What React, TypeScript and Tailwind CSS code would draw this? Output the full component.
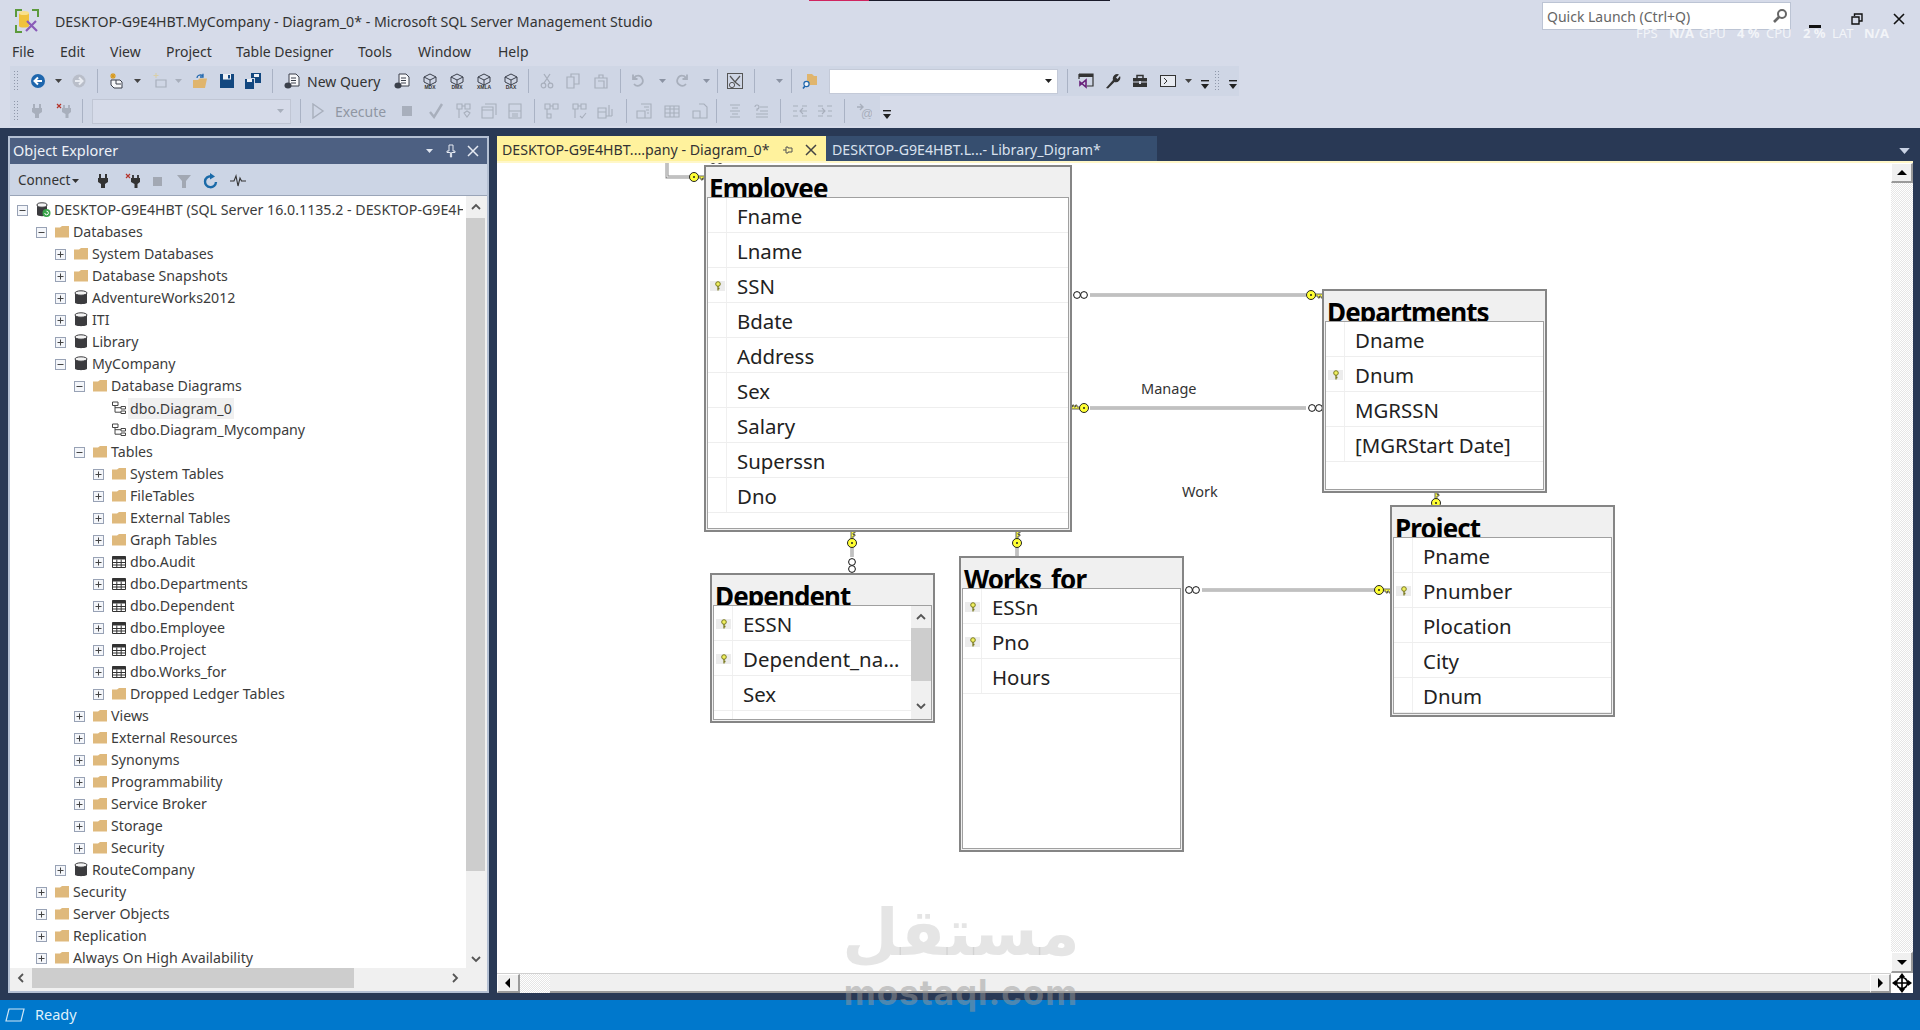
import type { ReactNode } from "react";

type Kind = "server" | "folder" | "db" | "diagram" | "table";

interface Node {
  level: number;
  label: string;
  kind: Kind;
  open?: boolean;
  leaf?: boolean;
  selected?: boolean;
}

const folder = (level: number, label: string, open = false): Node => ({ level, label, kind: "folder", open });
const db = (label: string, open = false): Node => ({ level: 2, label, kind: "db", open });
const table = (label: string): Node => ({ level: 4, label, kind: "table" });

const tree: Node[] = [
  { level: 0, label: "DESKTOP-G9E4HBT (SQL Server 16.0.1135.2 - DESKTOP-G9E4HBT\\User)", kind: "server", open: true },
  folder(1, "Databases", true),
  folder(2, "System Databases"),
  folder(2, "Database Snapshots"),
  db("AdventureWorks2012"),
  db("ITI"),
  db("Library"),
  db("MyCompany", true),
  folder(3, "Database Diagrams", true),
  { level: 4, label: "dbo.Diagram_0", kind: "diagram", leaf: true, selected: true },
  { level: 4, label: "dbo.Diagram_Mycompany", kind: "diagram", leaf: true },
  folder(3, "Tables", true),
  folder(4, "System Tables"),
  folder(4, "FileTables"),
  folder(4, "External Tables"),
  folder(4, "Graph Tables"),
  table("dbo.Audit"),
  table("dbo.Departments"),
  table("dbo.Dependent"),
  table("dbo.Employee"),
  table("dbo.Project"),
  table("dbo.Works_for"),
  folder(4, "Dropped Ledger Tables"),
  folder(3, "Views"),
  folder(3, "External Resources"),
  folder(3, "Synonyms"),
  folder(3, "Programmability"),
  folder(3, "Service Broker"),
  folder(3, "Storage"),
  folder(3, "Security"),
  db("RouteCompany"),
  folder(1, "Security"),
  folder(1, "Server Objects"),
  folder(1, "Replication"),
  folder(1, "Always On High Availability"),
];

const indent = ["pl-[7px]", "pl-[26px]", "pl-[45px]", "pl-[64px]", "pl-[83px]"];

function Ic({ children, className = "" }: { children: ReactNode; className?: string }) {
  return (
    <svg viewBox="0 0 16 16" className={`w-4 h-4 shrink-0 ${className}`}>
      {children}
    </svg>
  );
}

function Drop({ className = "", color = "#444" }: { className?: string; color?: string }) {
  return (
    <svg viewBox="0 0 7 4" className={`w-[7px] h-[4px] shrink-0 ${className}`}>
      <polygon points="0,0 7,0 3.5,4" fill={color} />
    </svg>
  );
}

function Sep({ className = "" }: { className?: string }) {
  return <div className={`w-px h-[24px] bg-[#a9b2c4] shrink-0 ${className}`} />;
}

function Grip() {
  return (
    <div className="w-[6px] h-[22px] shrink-0 bg-[radial-gradient(#8f98aa_0.8px,transparent_0.9px)] bg-[length:3px_3px]" />
  );
}

function Overflow({ className = "" }: { className?: string }) {
  return (
    <svg viewBox="0 0 8 10" className={`w-2 h-[10px] shrink-0 mt-[8px] ${className}`}>
      <rect x="0" y="0" width="8" height="1.4" fill="#222" />
      <polygon points="0,4 8,4 4,9" fill="#222" />
    </svg>
  );
}

function CubeIcon({ label, className = "" }: { label: string; className?: string }) {
  return (
    <Ic className={className}>
      <path d="M8 1 L14 4 V9 L8 12 L2 9 V4 Z M2 4 L8 7 L14 4 M8 7 V12" fill="none" stroke="#3a3f4a" strokeWidth="1" />
      <text x="8" y="15.8" textAnchor="middle" fontSize="5" fontWeight="700" fill="#333" fontFamily="Liberation Sans, sans-serif">
        {label}
      </text>
    </Ic>
  );
}

function FolderIc() {
  return (
    <Ic>
      <path d="M1 3.5 L1 13.5 L15 13.5 L15 2 L8 2 L6 3.5 Z" fill="#dfb97c" />
    </Ic>
  );
}

function DbIc() {
  return (
    <Ic>
      <path d="M2 3 V12.5 C2 14.7 14 14.7 14 12.5 V3 Z" fill="#3b3b3e" />
      <ellipse cx="8" cy="3" rx="6" ry="2.2" fill="#f4f4f4" stroke="#3b3b3e" />
    </Ic>
  );
}

function ServerIc() {
  return (
    <Ic>
      <path d="M2 3 V12.5 C2 14.7 12 14.7 12 12.5 V3 Z" fill="#3b3b3e" />
      <ellipse cx="7" cy="3" rx="5" ry="2.2" fill="#f4f4f4" stroke="#3b3b3e" />
      <circle cx="11.5" cy="11" r="4" fill="#3aa64a" />
      <path d="M9.8 11 A1.8 1.8 0 1 0 11.5 9.2" fill="none" stroke="#fff" strokeWidth="1" />
    </Ic>
  );
}

function DiagramIc() {
  return (
    <Ic>
      <path d="M1.5 2 H7 V5.5 H1.5 Z M10 6.5 H14.5 V9 H10 Z M10 11 H14.5 V13.5 H10 Z M4 5.5 V12.2 H10 M4 7.7 H10" fill="none" stroke="#444" strokeWidth="1" />
    </Ic>
  );
}

function TableIc() {
  return (
    <Ic>
      <path d="M1.5 2.5 H14.5 V13.5 H1.5 Z" fill="#fff" stroke="#333" strokeWidth="1" />
      <path d="M1.5 2.5 H14.5 V5.5 H1.5 Z" fill="#333" />
      <path d="M1.5 8.5 H14.5 M1.5 11 H14.5 M5.8 5.5 V13.5 M10.2 5.5 V13.5" stroke="#333" strokeWidth="1" />
    </Ic>
  );
}

const kindIcon: Record<Kind, ReactNode> = {
  server: <ServerIc />,
  folder: <FolderIc />,
  db: <DbIc />,
  diagram: <DiagramIc />,
  table: <TableIc />,
};

function Expander({ open }: { open?: boolean }) {
  return (
    <svg viewBox="0 0 11 11" className="w-[11px] h-[11px] shrink-0">
      <rect x="0.5" y="0.5" width="10" height="10" fill="#f4f6fa" stroke="#98a2b5" />
      <path d="M2.5 5.5 H8.5" stroke="#444" strokeWidth="1" />
      {!open && <path d="M5.5 2.5 V8.5" stroke="#444" strokeWidth="1" />}
    </svg>
  );
}

function TreeRow({ node }: { node: Node }) {
  return (
    <div className={`h-[22px] flex items-center whitespace-nowrap ${indent[node.level]}`}>
      <div className="w-[18px] shrink-0 flex">{!node.leaf && <Expander open={node.open} />}</div>
      <div className="w-[19px] shrink-0 flex">{kindIcon[node.kind]}</div>
      <span className={node.selected ? "bg-[#f0f0f0] px-[2px] -ml-[2px] h-[21px] leading-[21px]" : ""}>{node.label}</span>
    </div>
  );
}

function Chevron({ dir }: { dir: "up" | "down" | "left" | "right" }) {
  const pts = {
    up: "2,8 6,4 10,8",
    down: "2,4 6,8 10,4",
    left: "8,2 4,6 8,10",
    right: "4,2 8,6 4,10",
  }[dir];
  return (
    <svg viewBox="0 0 12 12" className="w-3 h-3">
      <polyline points={pts} fill="none" stroke="#555" strokeWidth="1.8" />
    </svg>
  );
}

function ObjectExplorer() {
  return (
    <div className="w-[481px] border-2 border-[#b4c0d3] flex flex-col bg-white">
      <div className="h-[26px] bg-[#4d6082] flex items-center pl-[3px] text-[14.5px] text-[#eef1f7] shrink-0">
        <span className="flex-1">Object Explorer</span>
        <Drop color="#dfe5ef" className="mr-[13px]" />
        <svg viewBox="0 0 10 14" className="w-[10px] h-[14px] mr-[11px]">
          <path d="M3 1 H7 V7 H9 V8.5 H5.6 V13 H4.4 V8.5 H1 V7 H3 Z" fill="none" stroke="#e6eaf2" strokeWidth="1" />
        </svg>
        <svg viewBox="0 0 12 12" className="w-3 h-3 mr-[8px]">
          <path d="M1 1 L11 11 M11 1 L1 11" stroke="#e6eaf2" strokeWidth="1.5" />
        </svg>
      </div>
      <div className="h-[32px] bg-[#ccd5e5] flex items-center pl-[8px] pt-[2px] text-[13.5px] text-[#333] shrink-0 border-b border-[#9aa5b8]">
        <span>Connect</span>
        <Drop color="#333" className="ml-[2px]" />
        <PlugIc color="#333" className="ml-[16px]" />
        <PlugOffIc color="#333" className="ml-[14px]" />
        <Ic className="ml-[8px]"><rect x="4" y="4" width="9" height="9" fill="#a2a8b3" /></Ic>
        <Ic className="ml-[11px]"><path d="M1 2 H15 L10 8 V15 H6 V8 Z" fill="#a2a8b3" /></Ic>
        <Ic className="ml-[11px]">
          <path d="M13 9 A5.5 5.5 0 1 1 8 3.2" fill="none" stroke="#1a6aa8" strokeWidth="2.4" />
          <polygon points="7,0 12,3.5 7,6.5" fill="#1a6aa8" />
        </Ic>
        <Ic className="ml-[11px]">
          <path d="M0 8 H4 L6 3 L8 13 L10 5 L11.5 8 H16" fill="none" stroke="#333" strokeWidth="1.1" />
        </Ic>
      </div>
      <div className="flex flex-1 min-h-0">
        <div className="w-[453px] mr-[3px] overflow-hidden pt-[3px] text-[14.2px] text-[#3c3c3c]">
          {tree.map((n, i) => (
            <TreeRow key={i} node={n} />
          ))}
        </div>
        <div className="w-[21px] pr-[2px] bg-[#f0f0f0] flex flex-col">
          <div className="h-[22px] flex items-center justify-center"><Chevron dir="up" /></div>
          <div className="h-[653px] bg-[#cdcdcd]" />
          <div className="flex-1 flex items-end justify-center pb-[3px]"><Chevron dir="down" /></div>
        </div>
      </div>
      <div className="h-[23px] bg-[#f0f0f0] flex items-start shrink-0">
        <div className="h-[20px] flex items-center w-full">
          <div className="w-[22px] flex justify-center"><Chevron dir="left" /></div>
          <div className="w-[322px] h-[20px] bg-[#cdcdcd]" />
          <div className="w-[90px]" />
          <div className="w-[22px] flex justify-center"><Chevron dir="right" /></div>
        </div>
      </div>
    </div>
  );
}

function PlugIc({ color, className = "" }: { color: string; className?: string }) {
  return (
    <Ic className={className}>
      <path d="M5 1 V5 M11 1 V5" stroke={color} strokeWidth="2" />
      <path d="M3 5 H13 V9 L10 11 V15 H6 V11 L3 9 Z" fill={color} />
    </Ic>
  );
}

function PlugOffIc({ color, className = "" }: { color: string; className?: string }) {
  return (
    <Ic className={className}>
      <path d="M8 2 V5 M13 2 V5" stroke={color} strokeWidth="1.8" />
      <path d="M6 5 H15 V9 L12.5 11 V15 H9.5 V11 L6 9 Z" fill={color} />
      <path d="M1 1 L5 5 M5 1 L1 5" stroke="#b5342a" strokeWidth="1.2" />
    </Ic>
  );
}

function CanvasKey({ x, y, rot }: { x: number; y: number; rot: number }) {
  return (
    <g transform={`translate(${x} ${y}) rotate(${rot})`}>
      <path d="M4 -1 H13 V1 H11.5 V3 H10 V1 H8.5 V3 H7 V1 H4 Z" fill="#ffff55" stroke="#222" strokeWidth="0.7" />
      <circle cx="0" cy="0" r="4.5" fill="#ffff33" stroke="#222" strokeWidth="1" />
      <circle cx="0" cy="0" r="1" fill="#222" />
    </g>
  );
}

function Inf({ x, y, vert }: { x: number; y: number; vert?: boolean }) {
  return (
    <g fill="#fff" stroke="#111" strokeWidth="1">
      <circle cx={vert ? x : x + 4} cy={vert ? y + 4 : y} r="3.4" />
      <circle cx={vert ? x : x + 11} cy={vert ? y + 11 : y} r="3.4" />
    </g>
  );
}

function DLine({ d }: { d: string }) {
  return (
    <g fill="none">
      <path d={d} stroke="#8f8f8f" strokeWidth="3" />
      <path d={d} stroke="#f2f2f2" strokeWidth="1" />
    </g>
  );
}

function Connectors() {
  return (
    <svg className="absolute left-0 top-0 w-[1394px] h-[808px]" viewBox="0 0 1394 808">
      <DLine d="M170 0 V14 H194" />
      <CanvasKey x={197} y={14} rot={0} />
      <Inf x={212} y={-3} />
      <DLine d="M593 132 H809" />
      <Inf x={576} y={132} />
      <CanvasKey x={814} y={132} rot={0} />
      <DLine d="M593 245 H809" />
      <CanvasKey x={587} y={245} rot={180} />
      <Inf x={811} y={245} />
      <DLine d="M355 384 V394" />
      <CanvasKey x={355} y={380} rot={-90} />
      <Inf x={355} y={395} vert />
      <DLine d="M520 384 V394" />
      <CanvasKey x={520} y={380} rot={-90} />
      <DLine d="M705 427 H878" />
      <Inf x={688} y={427} />
      <CanvasKey x={882} y={427} rot={0} />
      <CanvasKey x={939} y={340} rot={-90} />
    </svg>
  );
}

function KeyMark() {
  return (
    <svg viewBox="0 0 15 11" className="w-[15px] h-[11px] mt-[2px]">
      <rect width="15" height="10" fill="#ececec" />
      <circle cx="8" cy="3" r="2.3" fill="#f0f060" stroke="#7a7a20" />
      <path d="M8 5 V9.5 M8 7.5 H9.5" stroke="#7a7a20" strokeWidth="1.3" />
    </svg>
  );
}

interface Field {
  name: string;
  key?: boolean;
}

function FieldRow({ field }: { field: Field }) {
  return (
    <div className="h-[35px] shrink-0 flex border-b border-[#eeeeee]">
      <div className="w-[19px] shrink-0 border-r border-[#f0f0f0] flex items-center justify-center">
        {field.key && <KeyMark />}
      </div>
      <div className="pl-[10px] flex-1 min-w-0 truncate leading-[36px]">{field.name}</div>
    </div>
  );
}

function DiagramTable({ title, fields, className, scroll }: { title: string; fields: Field[]; className: string; scroll?: boolean }) {
  return (
    <div className={`absolute border-2 border-[#858585] bg-[#f0f0f0] flex flex-col ${className}`}>
      <div className="h-[30px] shrink-0 overflow-hidden pl-[3px] pt-[5px] text-[26px] leading-[32px] font-bold text-black whitespace-nowrap tracking-[-0.9px]">
        {title}
      </div>
      <div className="flex-1 min-h-0 flex mx-[1px] mb-[1px] bg-white border border-[#a0a0a0] text-[20.4px] text-[#222] overflow-hidden">
        <div className="flex-1 min-w-0 flex flex-col">
          {fields.map((f) => (
            <FieldRow key={f.name} field={f} />
          ))}
          {scroll && <div className="h-[35px] shrink-0 w-[19px] border-r border-[#f0f0f0]" />}
        </div>
        {scroll && (
          <div className="w-[20px] shrink-0 bg-[#f0f0f0] flex flex-col">
            <div className="h-[22px] flex items-center justify-center"><Chevron dir="up" /></div>
            <div className="h-[53px] bg-[#cdcdcd]" />
            <div className="flex-1 flex items-end justify-center pb-[7px]"><Chevron dir="down" /></div>
          </div>
        )}
      </div>
    </div>
  );
}

function Tri({ dir }: { dir: "up" | "down" | "left" | "right" }) {
  const pts = {
    up: "1,8 11,8 6,3",
    down: "1,4 11,4 6,9",
    left: "8,1 8,11 3,6",
    right: "4,1 4,11 9,6",
  }[dir];
  return (
    <svg viewBox="0 0 12 12" className="w-3 h-3">
      <polygon points={pts} fill="#000" />
    </svg>
  );
}

function ScrollBtn({ dir, className = "" }: { dir: "up" | "down" | "left" | "right"; className?: string }) {
  return (
    <div className={`bg-[#f0f0f0] border-t border-l border-white border-r-2 border-b-2 border-r-[#9a9a9a] border-b-[#9a9a9a] flex items-center justify-center shrink-0 ${className}`}>
      <Tri dir={dir} />
    </div>
  );
}

const dither = "bg-[repeating-conic-gradient(#e6e6e6_0_25%,#ffffff_0_50%)] bg-[length:2px_2px]";

function DocumentArea() {
  return (
    <div className="w-[1416px] flex flex-col">
      <div className="h-[25px] flex text-[14.2px] shrink-0">
        <div className="w-[329px] bg-[#fff29d] text-[#333] flex items-center pl-[5px] pt-[2px]">
          <span className="flex-1 whitespace-nowrap">DESKTOP-G9E4HBT....pany - Diagram_0*</span>
          <svg viewBox="0 0 12 10" className="w-3 h-[10px] mr-[11px]">
            <path d="M1 5 H4 M4 2 V8 H6 V7 H10 V3 H6 V2 Z" fill="none" stroke="#555" strokeWidth="1" />
          </svg>
          <svg viewBox="0 0 12 12" className="w-3 h-3 mr-[9px]">
            <path d="M1 1 L11 11 M11 1 L1 11" stroke="#444" strokeWidth="1.5" />
          </svg>
        </div>
        <div className="w-[331px] bg-[#364e6f] text-[#d9e1ee] flex items-center pl-[6px] pt-[2px] whitespace-nowrap">
          DESKTOP-G9E4HBT.L...- Library_Digram*
        </div>
        <div className="flex-1 flex items-center justify-end pr-[3px]">
          <Drop color="#c8d2e4" className="w-[11px] h-[6px] mt-[4px]" />
        </div>
      </div>
      <div className="h-[2px] bg-[#fff7c8] shrink-0" />
      <div className="flex-1 min-h-0 flex bg-white">
        <div className="w-[1394px] flex flex-col">
          <div className="relative flex-1 overflow-hidden bg-white text-[14.5px] text-[#333]">
            <Connectors />
            <DiagramTable
              title="Employee"
              className="left-[207px] top-[2px] w-[368px] h-[367px]"
              fields={[
                { name: "Fname" },
                { name: "Lname" },
                { name: "SSN", key: true },
                { name: "Bdate" },
                { name: "Address" },
                { name: "Sex" },
                { name: "Salary" },
                { name: "Superssn" },
                { name: "Dno" },
              ]}
            />
            <DiagramTable
              title="Departments"
              className="left-[825px] top-[126px] w-[225px] h-[204px]"
              fields={[{ name: "Dname" }, { name: "Dnum", key: true }, { name: "MGRSSN" }, { name: "[MGRStart Date]" }]}
            />
            <DiagramTable
              title="Project"
              className="left-[893px] top-[342px] w-[225px] h-[212px]"
              fields={[{ name: "Pname" }, { name: "Pnumber", key: true }, { name: "Plocation" }, { name: "City" }, { name: "Dnum" }]}
            />
            <DiagramTable
              title="Dependent"
              scroll
              className="left-[213px] top-[410px] w-[225px] h-[150px]"
              fields={[{ name: "ESSN", key: true }, { name: "Dependent_name", key: true }, { name: "Sex" }]}
            />
            <DiagramTable
              title="Works_for"
              className="left-[462px] top-[393px] w-[225px] h-[296px]"
              fields={[{ name: "ESSn", key: true }, { name: "Pno", key: true }, { name: "Hours" }]}
            />
            <span className="absolute left-[644px] top-[215px]">Manage</span>
            <span className="absolute left-[685px] top-[318px]">Work</span>
          </div>
          <div className="h-[20px] flex shrink-0 border-t border-[#d0d0d0]">
            <ScrollBtn dir="left" className="w-[23px]" />
            <div className={`w-[30px] ${dither}`} />
            <div className="flex-1 bg-[#f0f0f0] border-b-2 border-[#9a9a9a]" />
            <ScrollBtn dir="right" className="w-[21px]" />
          </div>
        </div>
        <div className="w-[22px] flex flex-col">
          <ScrollBtn dir="up" className="h-[20px]" />
          <div className={`flex-1 ${dither}`} />
          <ScrollBtn dir="down" className="h-[21px]" />
          <div className="h-[20px] flex items-center justify-center bg-white">
            <svg viewBox="0 0 20 20" className="w-5 h-5">
              <circle cx="10" cy="10" r="5.5" fill="none" stroke="#000" strokeWidth="1.6" />
              <path d="M10 3 V17 M3 10 H17" stroke="#000" strokeWidth="1.6" />
              <polygon points="10,0 13,4 7,4" fill="#000" />
              <polygon points="10,20 13,16 7,16" fill="#000" />
              <polygon points="0,10 4,7 4,13" fill="#000" />
              <polygon points="20,10 16,7 16,13" fill="#000" />
            </svg>
          </div>
        </div>
      </div>
    </div>
  );
}

function Toolbar1() {
  return (
    <div className="flex items-center h-[30px] text-[14px] text-[#333]">
      <div className="flex items-center h-[30px] w-[1202px] ml-[10px] bg-[#cfd6e5] pl-[3px] shrink-0">
        <Grip />
        <Ic className="ml-[11px]">
          <circle cx="8" cy="8" r="7" fill="#1e66ad" />
          <path d="M12 8 H5 M8 4.5 L4.5 8 L8 11.5" fill="none" stroke="#fff" strokeWidth="2" />
        </Ic>
        <Drop className="ml-[9px]" />
        <Ic className="ml-[9px]">
          <circle cx="8" cy="8" r="6.5" fill="#b9bec9" />
          <path d="M4 8 H11 M8 4.5 L11.5 8 L8 11.5" fill="none" stroke="#e8ebf1" strokeWidth="2" />
        </Ic>
        <Sep className="ml-[10px]" />
        <Ic className="ml-[10px]">
          <path d="M3 7 H12 L14 9 V15 H6 L3 12 Z" fill="#f6f7fa" stroke="#3a3f4a" />
          <path d="M8 7 V11 H13" fill="none" stroke="#3a3f4a" />
          <path d="M5 0 V6 M2 3 H8 M3 1 L7 5 M7 1 L3 5" stroke="#d99a1c" strokeWidth="1.1" />
        </Ic>
        <Drop className="ml-[10px]" />
        <Ic className="ml-[11px]">
          <path d="M4 7 H14 V14 H4 Z" fill="none" stroke="#a8afbc" strokeWidth="1.2" />
          <path d="M4 0 V5 M1.5 2.5 H6.5" stroke="#d9cfa8" strokeWidth="1.1" />
        </Ic>
        <Drop color="#a8afbc" className="ml-[7px]" />
        <Ic className="ml-[10px]">
          <path d="M1 7 H6 L7.5 5.5 H15 L13 15 H1 Z" fill="#e0b56d" />
          <path d="M5 5 C5 2 8 1.5 11 2.5 M11 0.8 V4 H8" fill="none" stroke="#1e66ad" strokeWidth="1.3" />
        </Ic>
        <Ic className="ml-[11px]">
          <path d="M1 1 H15 V15 H1 Z" fill="#12477f" />
          <rect x="4" y="1" width="8" height="5.5" fill="#eef1f6" />
          <rect x="9" y="2" width="2" height="3.5" fill="#12477f" />
          <rect x="4" y="10" width="8" height="3" fill="#12477f" />
        </Ic>
        <Ic className="ml-[10px]">
          <path d="M0 6 H9 V16 H0 Z" fill="#12477f" />
          <rect x="2" y="6" width="5" height="3" fill="#eef1f6" />
          <path d="M6 0 H16 V10 H10 V5 H6 Z" fill="#12477f" />
          <rect x="9" y="1" width="5" height="3" fill="#eef1f6" />
        </Ic>
        <Sep className="ml-[11px]" />
        <Ic className="ml-[11px]">
          <path d="M5 1 H12 L15 4 V13 H5 Z" fill="#f6f7fa" stroke="#3a3f4a" />
          <path d="M7 5 H12 M7 7.5 H12 M7 10 H12" stroke="#3a3f4a" />
          <ellipse cx="4" cy="12.5" rx="3.5" ry="3" fill="#3a3f4a" />
        </Ic>
        <span className="ml-[7px] w-[73px] whitespace-nowrap shrink-0">New Query</span>
        <Ic className="ml-[14px]">
          <path d="M5 1 H12 L15 4 V13 H5 Z" fill="#f6f7fa" stroke="#3a3f4a" />
          <path d="M7 5 H12 M7 7.5 H12 M7 10 H12" stroke="#3a3f4a" />
          <ellipse cx="4" cy="12.5" rx="3.5" ry="3" fill="#3a3f4a" />
        </Ic>
        <CubeIcon label="MDX" className="ml-[12px]" />
        <CubeIcon label="DMX" className="ml-[11px]" />
        <CubeIcon label="XMLA" className="ml-[11px]" />
        <CubeIcon label="DAX" className="ml-[11px]" />
        <Sep className="ml-[9px]" />
        <Ic className="ml-[10px]">
          <path d="M5 1 L11 10 M11 1 L5 10" stroke="#a8afbc" strokeWidth="1.3" />
          <circle cx="4.5" cy="12.5" r="2.3" fill="none" stroke="#a8afbc" strokeWidth="1.2" />
          <circle cx="11.5" cy="12.5" r="2.3" fill="none" stroke="#a8afbc" strokeWidth="1.2" />
        </Ic>
        <Ic className="ml-[10px]">
          <path d="M2 4 H9 V15 H2 Z M6 4 V1 H14 V11 H9" fill="none" stroke="#a8afbc" strokeWidth="1.2" />
        </Ic>
        <Ic className="ml-[12px]">
          <path d="M2 5 H14 V15 H2 Z M5 8 H11 V15 M6 5 V2 H10 V5" fill="none" stroke="#a8afbc" strokeWidth="1.2" />
        </Ic>
        <Sep className="ml-[11px]" />
        <Ic className="ml-[9px]">
          <path d="M4 11 A5 5 0 1 0 6 3 L3 6 M3 1.5 V6 H7.5" fill="none" stroke="#a8afbc" strokeWidth="1.8" />
        </Ic>
        <Drop color="#8b93a3" className="ml-[13px]" />
        <Ic className="ml-[8px]">
          <path d="M12 11 A5 5 0 1 1 10 3 L13 6 M13 1.5 V6 H8.5" fill="none" stroke="#a8afbc" strokeWidth="1.8" />
        </Ic>
        <Drop color="#8b93a3" className="ml-[13px]" />
        <Sep className="ml-[7px]" />
        <Ic className="ml-[9px]">
          <rect x="0.5" y="0.5" width="15" height="15" fill="none" stroke="#555" strokeWidth="1" />
          <path d="M3 3 L8 9 L13 3 M13 13 L8 9" fill="none" stroke="#555" strokeWidth="1.2" />
          <circle cx="5" cy="12" r="2.6" fill="#d6dbe9" stroke="#555" />
        </Ic>
        <Sep className="ml-[11px]" />
        <Drop color="#8b93a3" className="ml-[21px]" />
        <Sep className="ml-[8px]" />
        <Ic className="ml-[10px]">
          <path d="M5 1 H10 L12 3 H15 V12 H5 Z" fill="#e0b56d" />
          <circle cx="4.5" cy="11" r="2.6" fill="#f2f4f8" stroke="#1e66ad" strokeWidth="1.2" />
          <path d="M3 13 L1 15.5" stroke="#1e66ad" strokeWidth="1.6" />
        </Ic>
        <div className="ml-[11px] w-[229px] h-[25px] shrink-0 bg-white border border-[#c4cad8] flex items-center justify-end pr-[5px]">
          <Drop color="#222" />
        </div>
        <Sep className="ml-[9px]" />
        <Ic className="ml-[10px]">
          <path d="M1 1 H15 V13 H9 M1 1 V6" fill="none" stroke="#333" strokeWidth="1.2" />
          <rect x="1" y="1" width="14" height="3" fill="#333" />
          <path d="M2 9 L8 14 V7 L2 12 Z" fill="none" stroke="#68217a" strokeWidth="1.6" />
        </Ic>
        <Ic className="ml-[11px]">
          <path d="M1 15 L8 7 A4.5 4.5 0 0 1 14 1.5 L11 4.5 L12.5 6 L15 3 A4.5 4.5 0 0 1 9.5 9 L3 15.5 Z" fill="#333" />
        </Ic>
        <Ic className="ml-[11px]">
          <path d="M1 5 H15 V14 H1 Z" fill="#333" />
          <path d="M5 5 V2.5 H11 V5" fill="none" stroke="#333" strokeWidth="1.5" />
          <path d="M1 9 H15" stroke="#d6dbe9" />
          <rect x="7" y="8" width="2" height="3" fill="#d6dbe9" />
        </Ic>
        <Ic className="ml-[12px]">
          <rect x="0.5" y="2.5" width="15" height="11" fill="#e8ebf1" stroke="#333" />
          <path d="M4 5 L7 8 L4 11" fill="none" stroke="#333" />
        </Ic>
        <Drop className="ml-[9px]" />
        <Overflow className="ml-[9px]" />
      </div>
      <div className="flex items-center h-[30px] w-[27px] pl-[2px] bg-[#cfd6e5] shrink-0">
        <Grip />
        <Overflow className="ml-[9px]" />
      </div>
    </div>
  );
}

function DisabledIc({ d, className = "" }: { d: string; className?: string }) {
  return (
    <Ic className={className}>
      <path d={d} fill="none" stroke="#a8afbc" strokeWidth="1.1" />
    </Ic>
  );
}

function Toolbar2() {
  return (
    <div className="flex items-center h-[30px] text-[14px] text-[#8f96a3]">
      <div className="flex items-center h-[30px] w-[870px] ml-[10px] bg-[#cfd6e5] pl-[3px] shrink-0">
        <Grip />
        <PlugIc color="#a8afbc" className="ml-[10px]" />
        <PlugOffIc color="#a8afbc" className="ml-[11px]" />
        <Sep className="ml-[10px]" />
        <div className="ml-[9px] w-[199px] h-[25px] shrink-0 bg-[#d6dbe9] border border-[#c0c6d4] flex items-center justify-end pr-[6px]">
          <Drop color="#a8afbc" />
        </div>
        <Sep className="ml-[9px]" />
        <svg viewBox="0 0 14 16" className="w-[14px] h-4 ml-[10px] shrink-0">
          <path d="M2 1 L12 8 L2 15 Z" fill="none" stroke="#a8afbc" strokeWidth="1.4" />
        </svg>
        <span className="ml-[10px] w-[50px] shrink-0">Execute</span>
        <Ic className="ml-[14px]"><rect x="3" y="3" width="10" height="10" fill="#a8afbc" /></Ic>
        <Ic className="ml-[13px]"><path d="M2 9 L6 14 L14 1" fill="none" stroke="#a8afbc" strokeWidth="2.4" /></Ic>
        <DisabledIc className="ml-[11px]" d="M2 1 H7 V6 H2 Z M10 1 H15 V6 H10 Z M4 6 V15 M7 3 H10 M9 10 L12 8 L15 10 L12 14 Z" />
        <DisabledIc className="ml-[10px]" d="M4 1 H15 V12 M1 4 H12 V15 H1 Z M1 7 H12" />
        <DisabledIc className="ml-[10px]" d="M2 1 H14 V15 H2 Z M2 8 H14 M5 11 H11 M5 13 H11" />
        <Sep className="ml-[11px]" />
        <DisabledIc className="ml-[8px]" d="M2 1 H7 V6 H2 Z M10 1 H15 V6 H10 Z M4 6 V15 H8 V11 H4 M7 3 H10" />
        <DisabledIc className="ml-[12px]" d="M2 1 H7 V6 H2 Z M10 1 H15 V6 H10 Z M4 6 V15 M7 3 H10 M9 13 L11 15 L15 10" />
        <DisabledIc className="ml-[10px]" d="M1 5 H9 V15 H1 Z M1 9 H9 M12 2 V13 M15 6 V13 M9 13 H15" />
        <Sep className="ml-[13px]" />
        <DisabledIc className="ml-[9px]" d="M5 1 H15 V15 H5 M1 8 H9 V15 H1 Z M8 4 H13 M10 7 H13 M11 10 H13" />
        <DisabledIc className="ml-[12px]" d="M1 3 H15 V14 H1 Z M1 6 H15 M1 10 H15 M6 3 V14 M10 3 V14" />
        <DisabledIc className="ml-[12px]" d="M7 1 H12 L15 4 V15 H7 M1 8 H8 V15 H1 Z" />
        <Sep className="ml-[8px]" />
        <DisabledIc className="ml-[10px]" d="M3 2 H13 M5 5 H11 M3 8 H13 M5 11 H11 M3 14 H13" />
        <DisabledIc className="ml-[10px]" d="M2 4 A2 2 0 1 1 4 6 V8 M7 4 H15 M7 8 H15 M3 11 H15 M3 14 H15" />
        <Sep className="ml-[11px]" />
        <DisabledIc className="ml-[11px]" d="M1 3 H6 M1 13 H6 M1 8 H5 M15 8 H8 M11 5 L8 8 L11 11 M10 3 H15 M10 13 H15" />
        <DisabledIc className="ml-[9px]" d="M1 3 H6 M1 13 H6 M1 8 H8 M5 5 L8 8 L5 11 M11 8 H15 M10 3 H15 M10 13 H15" />
        <Sep className="ml-[11px]" />
        <Ic className="ml-[11px]">
          <path d="M1 4 H7 M4 1 L7 4 L4 7" fill="none" stroke="#a8afbc" strokeWidth="1.4" />
          <text x="5" y="15" fontSize="12" fill="#a8afbc" fontFamily="Liberation Sans, sans-serif">@</text>
        </Ic>
      </div>
      <Overflow className="ml-[3px]" />
    </div>
  );
}

export default function App() {
  return (
    <div className="relative w-[1920px] h-[1030px] overflow-hidden flex flex-col bg-[#293955] font-['Noto_Sans',sans-serif]">
      <div className="h-[128px] bg-[#d6dbe9] shrink-0">
        <div className="h-[37px] flex items-start">
          <svg viewBox="0 0 24 24" className="w-[24px] h-[24px] ml-[15px] mt-[9px] shrink-0">
            <path d="M1 8 V1 H7 M17 1 H23 V8 M1 16 V23 H7" fill="none" stroke="#5c9a3c" strokeWidth="2" />
            <path d="M4 4 V17 C4 19 14 19 14 17 V4 Z" fill="#f0c23c" />
            <ellipse cx="9" cy="4" rx="5" ry="2" fill="#f8e08c" />
            <path d="M11 22 L21 12 M12 12 L22 22" stroke="#8a5bb8" strokeWidth="2.2" />
          </svg>
          <span className="ml-[16px] mt-[11px] text-[14.2px] text-[#333] whitespace-nowrap">
            DESKTOP-G9E4HBT.MyCompany - Diagram_0* - Microsoft SQL Server Management Studio
          </span>
          <div className="ml-auto mt-[2px] mr-[129px] w-[249px] h-[28px] bg-white border border-[#bcc4d4] flex items-center pl-[4px] pr-[2px] text-[14px] text-[#666]">
            <span className="flex-1">Quick Launch (Ctrl+Q)</span>
            <svg viewBox="0 0 16 16" className="w-4 h-4">
              <circle cx="10" cy="6" r="4" fill="none" stroke="#666" strokeWidth="2" />
              <path d="M7 9 L2 14" stroke="#666" strokeWidth="2.6" />
            </svg>
          </div>
        </div>
        <div className="h-[29px] flex items-center pl-[12px] text-[14px] text-[#333]">
          <span className="w-[48px]">File</span>
          <span className="w-[50px]">Edit</span>
          <span className="w-[56px]">View</span>
          <span className="w-[70px]">Project</span>
          <span className="w-[122px]">Table Designer</span>
          <span className="w-[60px]">Tools</span>
          <span className="w-[80px]">Window</span>
          <span>Help</span>
        </div>
        <Toolbar1 />
        <Toolbar2 />
      </div>
      <div className="flex-1 min-h-0 flex gap-[8px] pl-[8px] pt-[8px] pb-[7px]">
        <ObjectExplorer />
        <DocumentArea />
      </div>
      <div className="h-[30px] bg-[#0078cc] shrink-0 flex items-center text-[14.5px] text-[#dff0fb]">
        <svg viewBox="0 0 20 14" className="w-5 h-[14px] ml-[5px]">
          <path d="M4 1 H19 L16 13 H1 Z" fill="none" stroke="#cfe6f6" strokeWidth="1.2" />
        </svg>
        <span className="ml-[10px]">Ready</span>
      </div>

      <div className="absolute top-0 left-[809px] w-[60px] h-px bg-[#d0245f]" />
      <div className="absolute top-0 left-[869px] w-[241px] h-px bg-[#1a1a2a]" />
      <div className="absolute left-[1636px] top-[25px] flex text-[13px] leading-[16px] text-[#f2f4f8] whitespace-nowrap">
        <span className="w-[33px]">FPS</span>
        <b className="w-[30px]">N/A</b>
        <span className="w-[38px]">GPU</span>
        <b className="w-[29px]">4 %</b>
        <span className="w-[37px]">CPU</span>
        <b className="w-[29px]">2 %</b>
        <span className="w-[32px]">LAT</span>
        <b>N/A</b>
      </div>
      <div className="absolute left-[1809px] top-[10px] flex items-start">
        <svg viewBox="0 0 12 12" className="w-3 h-3 mt-[7px]"><rect x="0" y="8" width="12" height="3" fill="#111" /></svg>
        <svg viewBox="0 0 12 12" className="w-3 h-3 ml-[30px] mt-[3px]">
          <path d="M3.5 3 V1 H11 V8 H8.5 M1 4 H8 V11 H1 Z" fill="none" stroke="#111" strokeWidth="1.4" />
        </svg>
        <svg viewBox="0 0 12 12" className="w-3 h-3 ml-[30px] mt-[3px]">
          <path d="M1 1 L11 11 M11 1 L1 11" stroke="#111" strokeWidth="1.6" />
        </svg>
      </div>

      <div className="absolute left-[845px] top-[893px] w-[232px] h-[121px] pointer-events-none flex flex-col items-center text-[#a8a8a84d]">
        <span dir="rtl" className="text-[65px] leading-[79px] font-bold font-['DejaVu_Sans',sans-serif]">مستقل</span>
        <span className="text-[35px] leading-[40px] font-bold font-['Inter',sans-serif] tracking-[1px] text-[#98989880]">mostaql.com</span>
      </div>
    </div>
  );
}
